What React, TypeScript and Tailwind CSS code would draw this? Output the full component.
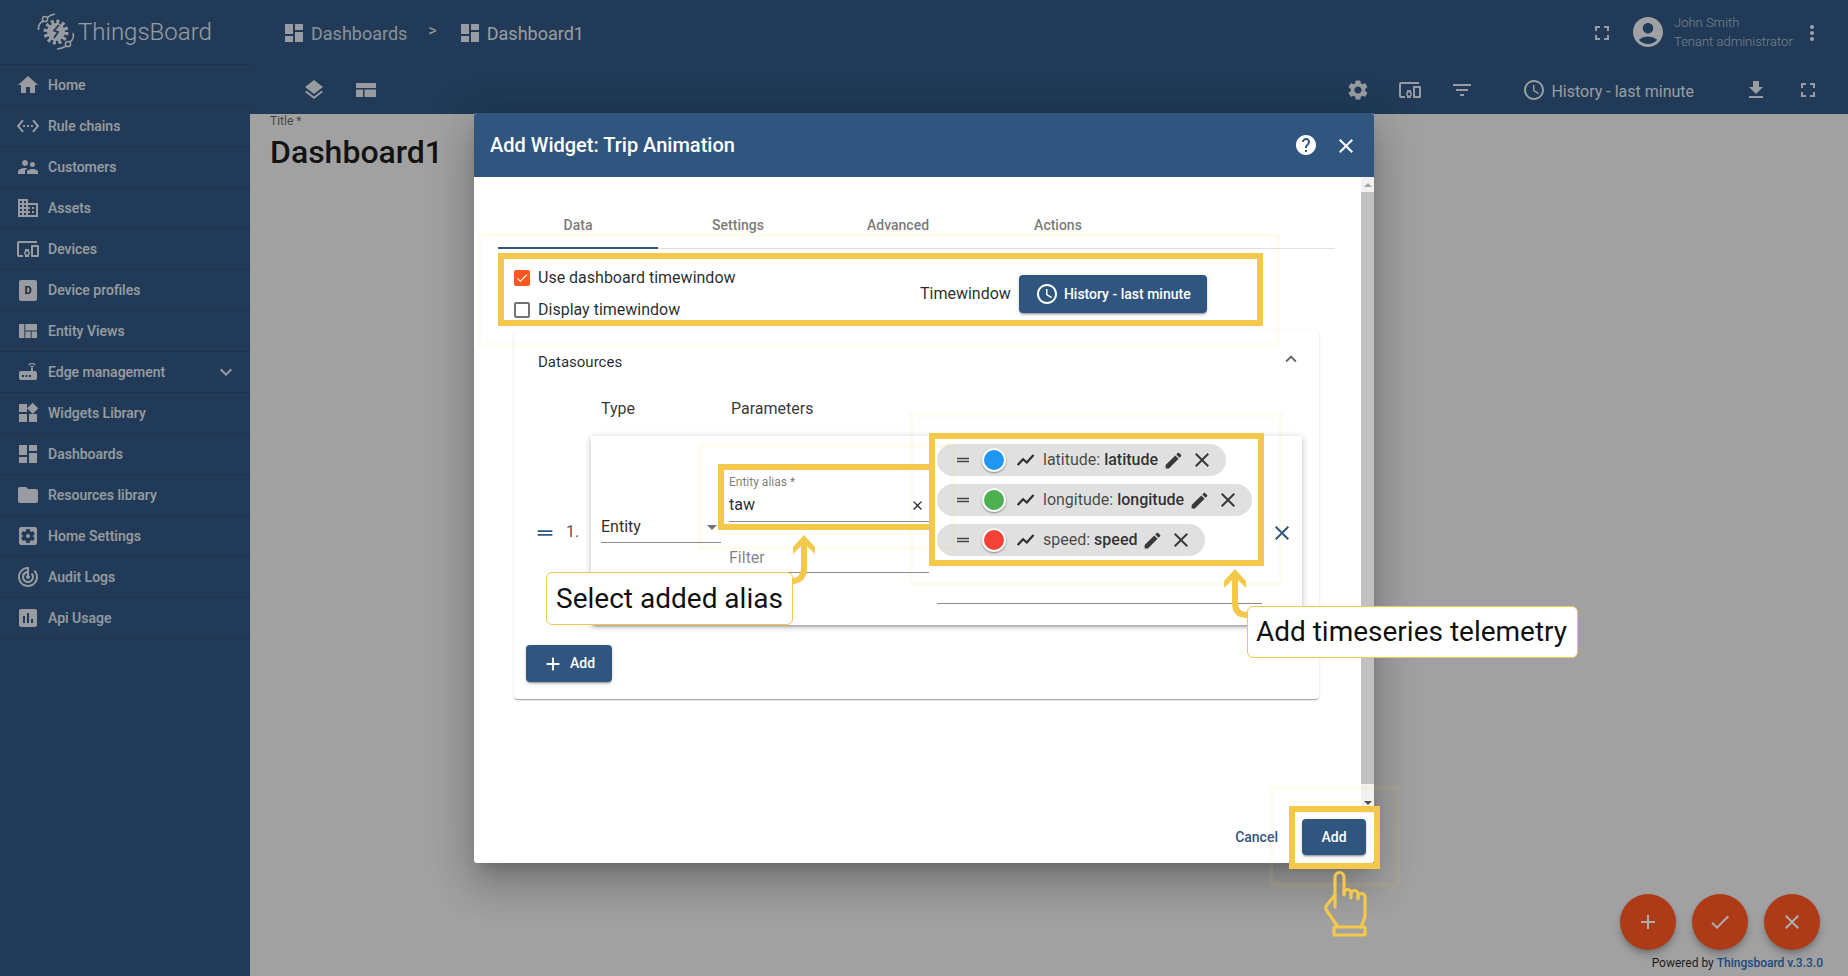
import React from "react";
import {
  MdHome, MdSettingsEthernet, MdSupervisorAccount, MdDomain, MdDevicesOther, MdExpandMore, MdExpandLess,
  MdWidgets, MdDashboard, MdFolder, MdSettingsApplications, MdTrackChanges, MdInsertChart, MdFullscreen, MdAccountCircle,
  MdMoreVert, MdLayers, MdSettings, MdFilterList, MdSchedule, MdFileDownload, MdHelp, MdClose, MdDragHandle,
  MdEdit, MdAdd, MdCheck, MdViewQuilt,
} from "react-icons/md";

function RouterIcon() {
  return (
    <svg viewBox="0 0 24 24" className="w-6 h-6" fill="currentColor">
      <path fillRule="evenodd" d="M5 11h10V7.5h2V11h2a2 2 0 0 1 2 2v5a2 2 0 0 1-2 2H5a2 2 0 0 1-2-2v-5a2 2 0 0 1 2-2zm1 4v2h2v-2H6zm3.5 0v2h2v-2h-2zm3.5 0v2h2v-2h-2z" />
      <path d="M12.2 4.4a5.6 5.6 0 0 1 7.6 0l-.9 1a4.2 4.2 0 0 0-5.8 0zM14 6.3a3 3 0 0 1 4 0l-.9 1a1.6 1.6 0 0 0-2.2 0z" />
    </svg>
  );
}

function WebLayoutIcon() {
  return (
    <svg viewBox="0 0 24 24" className="w-6 h-6 ml-[28px] opacity-85" fill="currentColor">
      <path d="M2 5h20v5H2zM2 11.5h7V19H2zM10.5 11.5H22V19H10.5z" />
    </svg>
  );
}

function TrendIcon() {
  return (
    <svg viewBox="0 0 24 24" className="w-[20px] h-[20px] ml-[10px] text-black/80 shrink-0" fill="none" stroke="currentColor" strokeWidth="2.6">
      <path d="M2 18l6.5-7 4.5 4 8-9" />
    </svg>
  );
}

function ProfileIcon() {
  return (
    <span className="w-[18px] h-[21px] rounded-[2px] bg-white/85 flex items-center justify-center text-[11px] font-bold leading-none text-[#1f3a5a] mx-[3px]">
      D
    </span>
  );
}

const items: { label: string; icon: React.ReactNode; more?: boolean }[] = [
  { label: "Home", icon: <MdHome size={24} /> },
  { label: "Rule chains", icon: <MdSettingsEthernet size={24} /> },
  { label: "Customers", icon: <MdSupervisorAccount size={24} /> },
  { label: "Assets", icon: <MdDomain size={24} /> },
  { label: "Devices", icon: <MdDevicesOther size={24} /> },
  { label: "Device profiles", icon: <ProfileIcon /> },
  { label: "Entity Views", icon: <MdViewQuilt size={24} /> },
  { label: "Edge management", icon: <RouterIcon />, more: true },
  { label: "Widgets Library", icon: <MdWidgets size={24} /> },
  { label: "Dashboards", icon: <MdDashboard size={24} /> },
  { label: "Resources library", icon: <MdFolder size={24} /> },
  { label: "Home Settings", icon: <MdSettingsApplications size={24} /> },
  { label: "Audit Logs", icon: <MdTrackChanges size={24} /> },
  { label: "Api Usage", icon: <MdInsertChart size={24} /> },
];

function Logo() {
  return (
    <svg viewBox="0 0 40 40" className="w-[40px] h-[40px] text-white/85" fill="none" stroke="currentColor">
      <circle cx="20" cy="20" r="10.5" strokeWidth="4" strokeDasharray="3 2.5" />
      <circle cx="20" cy="20" r="9" fill="currentColor" stroke="none" />
      <path d="M23 13l-5 5.5 4 1.5-4 6" stroke="#305680" strokeWidth="1.8" />
      <path d="M2.5 18C2 13 4 10.5 7 9M11.5 5.5C14 3 16 2.5 19 2" strokeWidth="1.6" />
      <circle cx="9" cy="7" r="2.6" strokeWidth="1.5" />
      <path d="M37 21c1 4 0 7-3 9M30 34c-3 2-6 3-9 3" strokeWidth="1.6" />
      <circle cx="32" cy="32" r="2.6" strokeWidth="1.5" />
    </svg>
  );
}

function Sidebar() {
  return (
    <aside className="w-[250px] shrink-0 h-full bg-[#305680] text-white/85 shadow-[1px_0_2px_rgba(0,0,0,0.15)]">
      <div className="h-[65px] flex items-center pl-[36px] gap-[2px] border-b border-black/10">
        <Logo />
        <span className="text-[24px] font-light text-white/85">ThingsBoard</span>
      </div>
      {items.map((it) => (
        <div key={it.label} className="h-[41px] flex items-center pl-[16px] pr-[12px] border-b border-black/10">
          <span className="w-6 h-6 flex items-center justify-center">{it.icon}</span>
          <span className="ml-[8px] text-[14px] font-medium flex-1">{it.label}</span>
          {it.more && <MdExpandMore size={24} />}
        </div>
      ))}
    </aside>
  );
}

function TopBar() {
  return (
    <header className="h-[114px] bg-[#305680] text-white shrink-0 flex flex-col">
      <div className="h-[66px] flex items-center pl-[32px] pr-[24px]">
        <MdDashboard size={24} className="opacity-85" />
        <span className="ml-[5px] text-[18px] opacity-75">Dashboards</span>
        <span className="ml-[21px] text-[16px] opacity-85 -mt-[4px]">&gt;</span>
        <MdDashboard size={24} className="ml-[21px] opacity-85" />
        <span className="ml-[5px] text-[18px] opacity-85">Dashboard1</span>
        <MdFullscreen size={24} className="ml-auto opacity-85" />
        <MdAccountCircle size={36} className="ml-[16px] opacity-90 -mt-[2px]" />
        <div className="ml-[8px] w-[126px] text-[13px] leading-[19px] opacity-60 font-light -mt-[2px]">
          <div>John Smith</div>
          <div className="whitespace-nowrap">Tenant administrator</div>
        </div>
        <MdMoreVert size={24} className="opacity-90" />
      </div>
      <div className="h-[48px] flex items-center pl-[52px] pr-[28px]">
        <MdLayers size={24} className="opacity-85" />
        <WebLayoutIcon />
        <MdSettings size={24} className="ml-auto opacity-85" />
        <MdDevicesOther size={24} className="ml-[28px] opacity-85" />
        <MdFilterList size={24} className="ml-[28px] opacity-85" />
        <MdSchedule size={24} className="ml-[48px] opacity-85" />
        <span className="ml-[5px] text-[16px] opacity-85 mt-[3px]">History - last minute</span>
        <MdFileDownload size={24} className="ml-[50px] opacity-85" />
        <MdFullscreen size={24} className="ml-[28px] opacity-85" />
      </div>
    </header>
  );
}

function Content() {
  return (
    <main className="flex-1 bg-[#eeeeee] flex flex-col pl-[20px]">
      <div className="text-[12px] leading-[14px] text-black/60">Title *</div>
      <div className="text-[32px] leading-[40px] font-medium text-black/90 mt-[4px]">Dashboard1</div>
      <div className="mt-auto flex justify-end gap-[16px] pr-[28px]">
        {[<MdAdd size={24} />, <MdCheck size={24} />, <MdClose size={24} />].map((ic, i) => (
          <span key={i} className="w-[56px] h-[56px] rounded-full bg-[#ff5722] text-white flex items-center justify-center shadow-[0_3px_5px_-1px_rgba(0,0,0,0.2),0_6px_10px_0_rgba(0,0,0,0.14)]">
            {ic}
          </span>
        ))}
      </div>
      <div className="h-[26px] flex items-center justify-end pr-[25px] text-[12px] text-black/85">
        Powered by&nbsp;<span className="text-[#2a6eb8] font-medium">Thingsboard v.3.3.0</span>
      </div>
    </main>
  );
}

function Chip({ name, value, color, w }: { name: string; value: string; color: string; w: string }) {
  return (
    <div className={`h-[32px] rounded-full bg-[#e0e0e0] flex items-center text-[16px] text-black/70 ${w}`}>
      <MdDragHandle size={18} className="ml-[17px] text-black/70 shrink-0" />
      <span className="ml-[10px] w-[24px] h-[24px] rounded-full border-2 border-white shadow-[0_1px_2px_rgba(0,0,0,0.4)] shrink-0" style={{ background: color }} />
      <TrendIcon />
      <span className="ml-[7px] whitespace-nowrap">
        {name}: <span className="font-medium text-black/80">{value}</span>
      </span>
      <MdEdit size={21} className="ml-[5px] text-black/75 shrink-0" />
      <MdClose size={24} className="ml-[6px] text-black/75 shrink-0" />
    </div>
  );
}

function Dialog() {
  return (
    <div className="absolute left-[474px] top-[113px] w-[900px] h-[750px] bg-white rounded-[3px] flex flex-col overflow-hidden shadow-[0_11px_15px_-7px_rgba(0,0,0,0.2),0_24px_38px_3px_rgba(0,0,0,0.14),0_9px_46px_8px_rgba(0,0,0,0.12)]">
      <div className="h-[64px] shrink-0 bg-[#305680] text-white flex items-center pl-[16px] pr-[16px]">
        <span className="text-[20px] font-medium">Add Widget: Trip Animation</span>
        <MdHelp size={24} className="ml-auto" />
        <MdClose size={24} className="ml-[16px] mt-[1px]" />
      </div>
      <div className="flex-1 flex min-h-0">
        <div className="flex-1 pl-[24px] pr-[26px] pt-[23px]">
          <div className="h-[49px] flex border-b border-[#e0e0e0] text-[14px] font-medium text-black/55">
            {["Data", "Settings", "Advanced", "Actions"].map((t, i) => (
              <div key={t} className={`w-[160px] h-[49px] flex items-center justify-center pt-[2px] -mb-px ${i === 0 ? "border-b-2 border-[#305680] pt-[3px]" : ""}`}>
                {t}
              </div>
            ))}
          </div>
          <div className="h-[81px] ml-[16px] flex items-start">
            <div className="w-[406px] pt-[17px] text-[16px] text-black/85">
              <div className="h-[24px] flex items-center">
                <span className="w-[16px] h-[16px] rounded-[2px] bg-[#ff5722] flex items-center justify-center text-white"><MdCheck size={14} /></span>
                <span className="ml-[8px]">Use dashboard timewindow</span>
              </div>
              <div className="h-[24px] mt-[8px] flex items-center">
                <span className="w-[16px] h-[16px] rounded-[2px] border-2 border-black/55" />
                <span className="ml-[8px]">Display timewindow</span>
              </div>
            </div>
            <div className="flex items-center mt-[26px]">
              <span className="text-[16px] text-black/85">Timewindow</span>
              <div className="ml-[8px] w-[188px] h-[38px] rounded-[4px] bg-[#305680] text-white flex items-center pl-[16px] text-[14px] font-medium shadow-[0_3px_1px_-2px_rgba(0,0,0,0.2),0_2px_2px_0_rgba(0,0,0,0.14),0_1px_5px_0_rgba(0,0,0,0.12)]">
                <MdSchedule size={24} />
                <span className="ml-[5px]">History - last minute</span>
              </div>
            </div>
          </div>
          <section className="ml-[16px] w-[805px] h-[369px] rounded-[4px] bg-white shadow-[0_2px_1px_-1px_rgba(0,0,0,0.2),0_1px_1px_0_rgba(0,0,0,0.14),0_1px_3px_0_rgba(0,0,0,0.12)]">
            <div className="flex items-center pl-[24px] pr-[17px] pt-[20px] h-[44px] text-[15px] text-black/85">
              Datasources
              <MdExpandLess size={22} className="ml-auto text-black/60 -mt-[6px]" />
            </div>
            <div className="flex text-[16px] text-black/80 mt-[23px] h-[24px] items-center">
              <span className="ml-[87px]">Type</span>
              <span className="ml-[96px]">Parameters</span>
            </div>
            <div className="flex items-center mt-[15px] pl-[20px]">
              <MdDragHandle size={22} className="text-[#305680] mt-[4px]" />
              <span className="ml-[10px] w-[25px] text-[16px] text-black/70 mt-[3px]">1.</span>
              <div className="w-[711px] h-[189px] bg-white flex pl-[10px] shadow-[0_3px_3px_-2px_rgba(0,0,0,0.3),0_2px_6px_0_rgba(0,0,0,0.14),0_1px_8px_0_rgba(0,0,0,0.12)]">
                <div className="w-[120px] mt-[79px] h-[26px] pb-[1px] border-b border-black/45 flex items-start justify-between text-[16px] text-black/85 box-content">
                  Entity
                  <span className="w-0 h-0 mt-[10px] mr-[4px] border-x-[5px] border-x-transparent border-t-[5px] border-t-black/55" />
                </div>
                <div className="ml-[8px] w-[200px] pt-[39px]">
                  <div className="text-[12px] leading-[14px] text-black/55">Entity alias *</div>
                  <div className="h-[28px] mt-[2px] pb-[2px] border-b border-black/45 flex items-center justify-between text-[16px] text-black/85 box-content">
                    taw
                    <MdClose size={15} className="mr-[4px] text-black/85" />
                  </div>
                  <div className="mt-[24px] h-[24px] pb-[2px] box-content border-b border-black/45 text-[16px] text-black/50">Filter</div>
                </div>
                <div className="ml-[8px] w-[325px] pt-[8px] flex flex-col">
                  <div className="flex flex-col gap-[8px]">
                    <Chip name="latitude" value="latitude" color="#2196f3" w="w-[289px]" />
                    <Chip name="longitude" value="longitude" color="#4caf50" w="w-[315px]" />
                    <Chip name="speed" value="speed" color="#f44336" w="w-[268px]" />
                  </div>
                  <div className="mt-[47px] border-b border-black/45" />
                </div>
                <MdClose size={24} className="ml-[8px] self-center mt-[4px] text-[#305680]" />
              </div>
            </div>
            <div className="ml-[12px] mt-[20px] w-[86px] h-[37px] rounded-[4px] bg-[#305680] text-white flex items-center pl-[16px] text-[14px] font-medium shadow-[0_3px_1px_-2px_rgba(0,0,0,0.2),0_2px_2px_0_rgba(0,0,0,0.14),0_1px_5px_0_rgba(0,0,0,0.12)]">
              <MdAdd size={22} />
              <span className="ml-[6px]">Add</span>
            </div>
          </section>
        </div>
        <div className="w-[13px] shrink-0 bg-[#f1f1f1] flex flex-col items-center">
          <span className="mt-[6px] w-0 h-0 border-x-[4px] border-x-transparent border-b-[4px] border-b-[#a3a3a3]" />
          <span className="mt-[5px] w-full h-[592px] bg-[#c1c1c1]" />
          <span className="mt-[17px] w-0 h-0 border-x-[4px] border-x-transparent border-t-[4px] border-t-[#505050]" />
        </div>
      </div>
      <div className="h-[50px] shrink-0 flex items-center justify-end pr-[8px] pb-[2px]">
        <span className="text-[14px] font-medium text-[#305680] mr-[24px]">Cancel</span>
        <span className="w-[64px] h-[36px] rounded-[4px] bg-[#305680] text-white text-[14px] font-medium flex items-center justify-center shadow-[0_3px_1px_-2px_rgba(0,0,0,0.2),0_2px_2px_0_rgba(0,0,0,0.14),0_1px_5px_0_rgba(0,0,0,0.12)]">Add</span>
      </div>
    </div>
  );
}

function Annotations() {
  const strong = "absolute border-[6px] border-[#f4c84b] pointer-events-none";
  const ring = "absolute border-[4px] border-[#f4c84b]/[0.08] pointer-events-none";
  const callout = "absolute bg-white border border-[#f4c84b] rounded-[6px] text-[28px] text-black/95 flex items-center justify-center whitespace-nowrap";
  return (
    <>
      <div className={`${ring} left-[477px] top-[233px] w-[803px] h-[114px]`} />
      <div className={`${strong} left-[498px] top-[253px] w-[765px] h-[73px]`} />

      <div className={`${ring} left-[698px] top-[444px] w-[257px] h-[106px]`} />
      <div className={`${ring} left-[909px] top-[413px] w-[374px] h-[173px]`} />
      <div className={`${strong} left-[718px] top-[464px] w-[217px] h-[66px] border-r-0`} />
      <div className={`${strong} left-[929px] top-[433px] w-[335px] h-[133px]`} />

      <div className={`${ring} left-[1269px] top-[786px] w-[131px] h-[101px]`} />
      <div className={`${strong} left-[1289px] top-[806px] w-[91px] h-[63px]`} />

      <svg className="absolute left-[780px] top-[534px] w-[40px] h-[56px]" viewBox="0 0 40 56" fill="none" stroke="#f4c84b" strokeWidth="6">
        <path d="M24 8v26c0 9-5 13-12 13" />
        <polygon points="24,1 35,13 35,20 24,9 13,20 13,13" fill="#f4c84b" stroke="none" />
      </svg>
      <svg className="absolute left-[1215px] top-[567px] w-[40px] h-[56px]" viewBox="0 0 40 56" fill="none" stroke="#f4c84b" strokeWidth="6">
        <path d="M20 8v28c0 9 5 12 12 12" />
        <polygon points="20,2 31,14 31,21 20,10 9,21 9,14" fill="#f4c84b" stroke="none" />
      </svg>
      <div className={`${callout} left-[546px] top-[572px] w-[247px] h-[53px]`}>Select added alias</div>
      <div className={`${callout} left-[1247px] top-[606px] w-[331px] h-[52px] pr-[2px]`}>Add timeseries telemetry</div>

      <svg className="absolute left-[1320px] top-[865px] w-[55px] h-[75px]" viewBox="0 0 55 75" fill="none" stroke="#f4c84b" strokeWidth="3.2" strokeLinejoin="round" strokeLinecap="round">
        <path d="M15 42V12a4.5 4.5 0 0 1 9 0v18" />
        <path d="M24 28a3.5 3.5 0 0 1 7 0v5" />
        <path d="M31 29a3.5 3.5 0 0 1 7 0v5" />
        <path d="M38 32a3.5 3.5 0 0 1 7 0v20l-4 10" />
        <path d="M15 30L7 40a4 4 0 0 0 0 6l11 16" />
        <rect x="14" y="62" width="31" height="8" rx="1" />
      </svg>
    </>
  );
}

export default function App() {
  return (
    <div className="relative w-[1848px] h-[976px] overflow-hidden flex font-['Roboto',sans-serif] bg-[#eeeeee]">
      <Sidebar />
      <div className="flex-1 flex flex-col min-w-0">
        <TopBar />
        <Content />
      </div>
      <div className="absolute inset-0 bg-black/[0.32]" />
      <Dialog />
      <Annotations />
    </div>
  );
}
